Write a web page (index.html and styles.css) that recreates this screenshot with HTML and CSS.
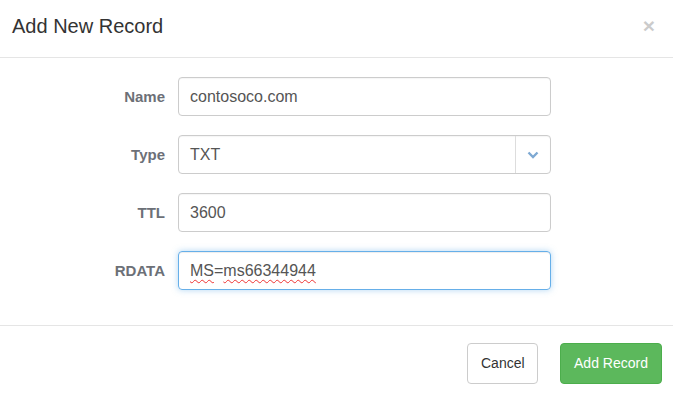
FILE: index.html
```html
<!DOCTYPE html>
<html lang="en">
<head>
    <meta charset="UTF-8">
    <title>Add New Record</title>
    <link rel="stylesheet" href="styles.css">
</head>
<body>
    <div class="modal">
        <div class="modal-header">
            <h4 class="modal-title">Add New Record</h4>
            <span class="close">&times;</span>
        </div>
        <div class="modal-body">
            <div class="form-row">
                <label>Name</label>
                <div class="form-control">contosoco.com</div>
            </div>
            <div class="form-row">
                <label>Type</label>
                <div class="form-control select">
                    <span class="value">TXT</span>
                    <span class="caret">
                        <svg width="12" height="8" viewBox="0 0 12 8"><path d="M1.5 1.5 L6 6 L10.5 1.5" fill="none" stroke="#7ea9d3" stroke-width="2.4"/></svg>
                    </span>
                </div>
            </div>
            <div class="form-row">
                <label>TTL</label>
                <div class="form-control">3600</div>
            </div>
            <div class="form-row">
                <label>RDATA</label>
                <div class="form-control focused"><span class="typo">MS</span>=<span class="typo">ms66344944</span></div>
            </div>
        </div>
        <div class="modal-footer">
            <button class="btn btn-default">Cancel</button>
            <button class="btn btn-success">Add Record</button>
        </div>
    </div>
</body>
</html>
```

FILE: styles.css
```css
body {
    margin: 0;
    background: #fff;
    font-family: "Liberation Sans", Arial, sans-serif;
    color: #333;
}
.modal {
    width: 673px;
    height: 400px;
    background: #fff;
}
.modal-header {
    height: 58px;
    box-sizing: border-box;
    padding: 12px 18px 0 12px;
    border-bottom: 1px solid #e5e5e5;
    display: flex;
    justify-content: space-between;
    align-items: flex-start;
}
.modal-title {
    margin: 0;
    font-size: 20px;
    font-weight: normal;
    line-height: 28px;
    color: #333;
}
.close {
    font-size: 21px;
    font-weight: bold;
    line-height: 28px;
    color: #000;
    opacity: 0.2;
}
.modal-body {
    padding: 19px 0 35px 0;
    display: flex;
    flex-direction: column;
    gap: 19px;
}
.form-row {
    display: grid;
    grid-template-columns: 165px 373px;
    column-gap: 13px;
    align-items: center;
}
.form-row label {
    text-align: right;
    font-size: 15px;
    font-weight: bold;
    color: #6c7077;
}
.form-control {
    height: 39px;
    box-sizing: border-box;
    border: 1px solid #ccc;
    border-radius: 4px;
    padding: 0 11px;
    font-size: 16px;
    line-height: 37px;
    color: #555;
    box-shadow: inset 0 1px 1px rgba(0, 0, 0, 0.04);
}
.form-control.select {
    display: flex;
    padding-right: 0;
}
.select .value {
    flex: 1;
}
.select .caret {
    width: 34px;
    border-left: 1px solid #ddd;
    display: flex;
    align-items: center;
    justify-content: center;
}
.form-control.focused {
    border-color: #66afe9;
    box-shadow: inset 0 1px 1px rgba(0, 0, 0, 0.075), 0 0 6px rgba(102, 175, 233, 0.5);
}
.typo {
    text-decoration: underline wavy #e33;
    text-decoration-thickness: 1px;
    text-underline-offset: 3px;
}
.modal-footer {
    border-top: 1px solid #e5e5e5;
    padding: 17px 11px 0 0;
    display: flex;
    justify-content: flex-end;
    gap: 22px;
}
.btn {
    font-family: "Liberation Sans", Arial, sans-serif;
    font-size: 14px;
    line-height: 19px;
    padding: 10px 13px;
    border-radius: 4px;
    border: 1px solid #ccc;
    cursor: pointer;
}
.btn-default {
    background: #fff;
    color: #333;
    width: 71px;
}
.btn-success {
    background: #5cb85c;
    border-color: #4cae4c;
    color: #fff;
    width: 102px;
}
```
